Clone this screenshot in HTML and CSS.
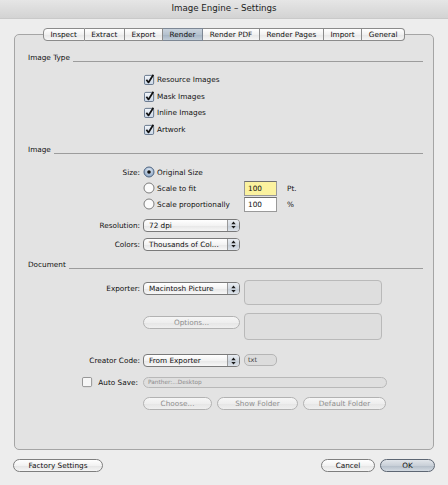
FILE: index.html
```html
<!DOCTYPE html>
<html>
<head>
<meta charset="utf-8">
<title>Image Engine – Settings</title>
<link rel="stylesheet" href="styles.css">
</head>
<body>
<div class="window">
  <div class="titlebar">Image Engine – Settings</div>
  <div class="content">
    <div class="tabs">
      <span class="tab first">Inspect</span><span class="tab">Extract</span><span class="tab">Export</span><span class="tab selected">Render</span><span class="tab">Render PDF</span><span class="tab">Render Pages</span><span class="tab">Import</span><span class="tab last">General</span>
    </div>
    <div class="panel">
      <div class="section-head head-type"><span>Image Type</span><i></i></div>
      <div class="checks">
        <div class="check"><svg class="cb" viewBox="0 0 12 12"><defs><linearGradient id="cbg" x1="0" y1="0" x2="0" y2="1"><stop offset="0" stop-color="#f4f7fb"/><stop offset="1" stop-color="#c9d6e6"/></linearGradient></defs><rect x="0.5" y="1.5" width="10" height="10" rx="1.5" fill="url(#cbg)" stroke="#5d6f86"/><path d="M2.6 6.2 L4.9 9.2 L10.2 0.8" fill="none" stroke="#111" stroke-width="1.9" stroke-linejoin="round"/></svg><span>Resource Images</span></div>
        <div class="check"><svg class="cb" viewBox="0 0 12 12"><rect x="0.5" y="1.5" width="10" height="10" rx="1.5" fill="url(#cbg)" stroke="#5d6f86"/><path d="M2.6 6.2 L4.9 9.2 L10.2 0.8" fill="none" stroke="#111" stroke-width="1.9" stroke-linejoin="round"/></svg><span>Mask Images</span></div>
        <div class="check"><svg class="cb" viewBox="0 0 12 12"><rect x="0.5" y="1.5" width="10" height="10" rx="1.5" fill="url(#cbg)" stroke="#5d6f86"/><path d="M2.6 6.2 L4.9 9.2 L10.2 0.8" fill="none" stroke="#111" stroke-width="1.9" stroke-linejoin="round"/></svg><span>Inline Images</span></div>
        <div class="check"><svg class="cb" viewBox="0 0 12 12"><rect x="0.5" y="1.5" width="10" height="10" rx="1.5" fill="url(#cbg)" stroke="#5d6f86"/><path d="M2.6 6.2 L4.9 9.2 L10.2 0.8" fill="none" stroke="#111" stroke-width="1.9" stroke-linejoin="round"/></svg><span>Artwork</span></div>
      </div>

      <div class="section-head head-image"><span>Image</span><i></i></div>
      <div class="row row-size">
        <div class="lbl">Size:</div>
        <div class="radio"><svg class="rb" viewBox="0 0 12 12"><defs><radialGradient id="rsel" cx="0.5" cy="0.35" r="0.7"><stop offset="0" stop-color="#e4edf7"/><stop offset="1" stop-color="#7f9bbd"/></radialGradient></defs><circle cx="6" cy="6" r="5" fill="url(#rsel)" stroke="#4f6581"/><circle cx="6" cy="6" r="1.8" fill="#111"/></svg><span>Original Size</span></div>
      </div>
      <div class="row">
        <div class="lbl"></div>
        <div class="radio"><svg class="rb" viewBox="0 0 12 12"><circle cx="6" cy="6" r="5" fill="#fbfbfb" stroke="#7d7d7d"/></svg><span>Scale to fit</span></div>
        <div class="field yellow">100</div><span class="unit">Pt.</span>
      </div>
      <div class="row">
        <div class="lbl"></div>
        <div class="radio"><svg class="rb" viewBox="0 0 12 12"><circle cx="6" cy="6" r="5" fill="#fbfbfb" stroke="#7d7d7d"/></svg><span>Scale proportionally</span></div>
        <div class="field">100</div><span class="unit">%</span>
      </div>
      <div class="row row-res">
        <div class="lbl">Resolution:</div>
        <div class="popup"><span>72 dpi</span><b class="arr"><svg viewBox="0 0 8 11"><path d="M4 1.5 L6.5 4.5 H1.5 Z M4 9.5 L6.5 6.5 H1.5 Z" fill="#1a1a1a"/></svg></b></div>
      </div>
      <div class="row row-col">
        <div class="lbl">Colors:</div>
        <div class="popup"><span>Thousands of Col...</span><b class="arr"><svg viewBox="0 0 8 11"><path d="M4 1.5 L6.5 4.5 H1.5 Z M4 9.5 L6.5 6.5 H1.5 Z" fill="#1a1a1a"/></svg></b></div>
      </div>

      <div class="section-head head-doc"><span>Document</span><i></i></div>
      <div class="drow drow-exp">
        <div class="lbl">Exporter:</div>
        <div class="popup"><span>Macintosh Picture</span><b class="arr"><svg viewBox="0 0 8 11"><path d="M4 1.5 L6.5 4.5 H1.5 Z M4 9.5 L6.5 6.5 H1.5 Z" fill="#1a1a1a"/></svg></b></div>
        <div class="box box-exp"></div>
      </div>
      <div class="drow drow-opt">
        <div class="lbl"></div>
        <div class="btn disabled btn-opt">Options...</div>
        <div class="box box-opt"></div>
      </div>
      <div class="drow drow-creator">
        <div class="lbl">Creator Code:</div>
        <div class="popup"><span>From Exporter</span><b class="arr"><svg viewBox="0 0 8 11"><path d="M4 1.5 L6.5 4.5 H1.5 Z M4 9.5 L6.5 6.5 H1.5 Z" fill="#1a1a1a"/></svg></b></div>
        <div class="txtfield">txt</div>
      </div>
      <div class="drow drow-auto">
        <div class="lbl autolbl"><svg class="cb" viewBox="0 0 12 12"><rect x="0.5" y="0.5" width="10" height="10" rx="1.5" fill="#f6f6f6" stroke="#8a8a8a"/></svg><span>Auto Save:</span></div>
        <div class="pathfield">Panther:...Desktop</div>
      </div>
      <div class="drow drow-btns">
        <div class="lbl"></div>
        <div class="btn disabled btn-choose">Choose...</div>
        <div class="btn disabled btn-show">Show Folder</div>
        <div class="btn disabled btn-default">Default Folder</div>
      </div>
    </div>
    <div class="footer">
      <div class="btn btn-factory">Factory Settings</div>
      <div class="spacer"></div>
      <div class="btn btn-cancel">Cancel</div>
      <div class="btn btn-ok">OK</div>
    </div>
  </div>
</div>
</body>
</html>
```

FILE: styles.css
```css
* { box-sizing: border-box; }
html, body { margin: 0; padding: 0; }
body {
  font-family: "DejaVu Sans", "Liberation Sans", sans-serif;
  font-size: 7.3px;
  color: #111;
  background: #ececec;
}
.window {
  width: 448px;
  height: 485px;
  background: #ededed;
  overflow: hidden;
}
.titlebar {
  height: 19px;
  line-height: 17px;
  text-align: center;
  font-size: 8.7px;
  color: #1c1c1c;
  background: linear-gradient(#e6e6e6, #d3d3d3);
  border-bottom: 1px solid #c9c9c9;
}
.content {
  padding: 0 14px;
}
.tabs {
  margin-top: 9px;
  height: 13px;
  display: flex;
  justify-content: center;
  position: relative;
  z-index: 1;
}
.tab {
  height: 13px;
  line-height: 11px;
  padding: 0 6.6px;
  border: 1px solid #8b8b8b;
  border-left: none;
  background: linear-gradient(#ffffff, #f1f1f1 50%, #e6e6e6 51%, #f6f6f6);
  color: #111;
  white-space: nowrap;
}
.tab.first { border-left: 1px solid #8b8b8b; border-radius: 4px 0 0 4px; }
.tab.last { border-radius: 0 4px 4px 0; }
.tab.selected {
  background: linear-gradient(#c9d3dd, #b5c2cf 50%, #a3b3c3 51%, #c1ccd7);
  border-color: #7d8794;
}
.panel {
  margin-top: -7px;
  height: 416px;
  border: 1px solid #a5a5a5;
  border-radius: 5px;
  background: #e3e3e3;
  padding-top: 17px;
}
.section-head {
  display: flex;
  align-items: flex-end;
  height: 12px;
  line-height: 12px;
  padding-left: 13px;
  padding-right: 10px;
}
.section-head i {
  flex: 1;
  height: 0;
  border-top: 1px solid #9c9c9c;
  margin: 0 0 2px 3px;
}
.head-image { margin-top: 6px; }
.head-doc { margin-top: 7px; }
.checks {
  margin-top: 7px;
  padding-left: 129px;
}
.check {
  display: flex;
  align-items: center;
  height: 16.8px;
}
.cb { width: 11px; height: 11px; margin-right: 2px; flex: none; }
.row {
  display: flex;
  align-items: center;
  height: 16px;
}
.row-size { margin-top: 8px; }
.row-res { margin-top: 5px; }
.row-col { margin-top: 3px; }
.lbl {
  width: 125px;
  margin-right: 3px;
  text-align: right;
  flex: none;
  white-space: nowrap;
}
.radio {
  width: 101px;
  display: flex;
  align-items: center;
  flex: none;
}
.rb { width: 12px; height: 12px; margin-right: 2px; flex: none; }
.field {
  width: 33px;
  height: 15px;
  line-height: 13px;
  padding-left: 3px;
  border: 1px solid #999;
  border-top-color: #6f6f6f;
  background: #fff;
}
.field.yellow { background: #fbf29f; }
.unit { margin-left: 10px; }
.popup {
  width: 97px;
  height: 13px;
  border: 1px solid #7a7a7a;
  border-radius: 4px;
  display: flex;
  background: linear-gradient(#ffffff, #f3f3f3 50%, #e6e6e6 51%, #f7f7f7);
  flex: none;
  overflow: hidden;
}
.popup span {
  flex: 1;
  line-height: 11px;
  padding-left: 5px;
  white-space: nowrap;
}
.popup .arr {
  width: 12px;
  border-left: 1px solid #9a9a9a;
  background: linear-gradient(#e9edf2, #d2d9e1 50%, #c3ccd6 51%, #dde3ea);
  display: flex;
  align-items: center;
  justify-content: center;
}
.popup .arr svg { width: 7px; height: 10px; }
.drow {
  display: flex;
  align-items: flex-start;
}
.drow .lbl { line-height: 13px; }
.drow-exp { margin-top: 9px; }
.drow-exp .lbl, .drow-exp .popup { margin-top: 2px; }
.drow-opt { margin-top: 8px; }
.drow-opt .btn-opt { margin-top: 3px; }
.drow-creator { margin-top: 14px; }
.drow-auto { margin-top: 9px; align-items: center; }
.drow-btns { margin-top: 8px; }
.box {
  margin-left: 4px;
  width: 138px;
  border: 1px solid #b9b9b9;
  border-radius: 4px;
  background: #dedede;
}
.box-exp { height: 25px; }
.box-opt { height: 27px; }
.btn {
  height: 13px;
  line-height: 11px;
  text-align: center;
  border: 1px solid #7e7e7e;
  border-radius: 7px;
  background: linear-gradient(#ffffff, #f2f2f2 50%, #e4e4e4 51%, #f5f5f5);
  white-space: nowrap;
  flex: none;
}
.btn.disabled {
  border-color: #b2b2b2;
  color: #8f8f8f;
  background: linear-gradient(#f6f6f6, #eeeeee 50%, #e5e5e5 51%, #efefef);
}
.btn-opt { width: 97px; }
.txtfield {
  margin-left: 4px;
  width: 33px;
  height: 12px;
  line-height: 10px;
  padding-left: 3px;
  border: 1px solid #b5b5b5;
  border-radius: 5px;
  background: #dcdcdc;
  color: #3a3a3a;
  font-size: 6.6px;
}
.autolbl {
  display: flex;
  align-items: center;
  justify-content: flex-end;
  width: 123px;
  margin-right: 5px;
}
.autolbl .cb { margin-right: 5px; }
.pathfield {
  width: 244px;
  height: 11px;
  line-height: 9px;
  padding-left: 4px;
  border: 1px solid #b8b8b8;
  border-radius: 6px;
  background: #dfdfdf;
  color: #8c8c8c;
  font-size: 5.8px;
}
.btn-choose { width: 69px; }
.btn-show { width: 81px; margin-left: 5px; }
.btn-default { width: 83px; margin-left: 5px; }
.footer {
  display: flex;
  margin-top: 9px;
  margin-left: -1px;
  margin-right: -1px;
}
.spacer { flex: 1; }
.btn-factory { width: 90px; }
.btn-cancel { width: 54px; }
.btn-ok {
  width: 55px;
  margin-left: 5px;
  border-color: #5d6673;
  background: linear-gradient(#e1e5ea, #c9d0d8 50%, #b2bcc7 51%, #d3dae2);
}
```
